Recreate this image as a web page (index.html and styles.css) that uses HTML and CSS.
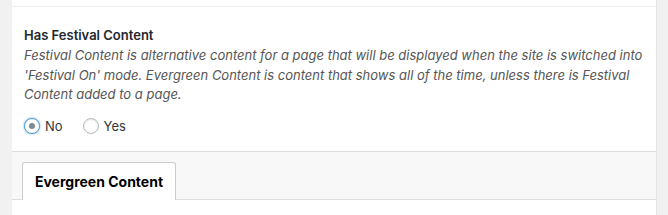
FILE: index.html
```html
<!DOCTYPE html>
<html>
<head>
<meta charset="utf-8">
<link rel="stylesheet" href="styles.css">
</head>
<body>
<div class="page">
  <div class="gutter-left"></div>
  <div class="panel">
    <div class="top-strip"></div>
    <div class="field">
      <div class="label">Has Festival Content</div>
      <p class="desc">Festival Content is alternative content for a page that will be displayed when the site is switched into 'Festival On' mode. Evergreen Content is content that shows all of the time, unless there is Festival Content added to a page.</p>
      <div class="radios">
        <label class="radio"><span class="dot checked"></span>No</label>
        <label class="radio"><span class="dot"></span>Yes</label>
      </div>
    </div>
    <div class="tabs">
      <div class="tab">Evergreen Content</div>
    </div>
    <div class="tab-body"></div>
  </div>
  <div class="gutter-right"></div>
</div>
</body>
</html>
```
FILE: styles.css
```css
html, body { margin: 0; padding: 0; }
body {
  background: #f1f1f1;
  font-family: Inter, "Liberation Sans", sans-serif;
  color: #23282d;
  width: 668px;
  height: 215px;
  overflow: hidden;
}
.page { display: flex; height: 215px; }
.gutter-left { width: 12px; background: #f1f1f1; flex: none; }
.gutter-right { width: 11px; background: #f1f1f1; flex: none; }
.panel {
  flex: 1;
  background: #fff;
  border-right: 1px solid #e5e5e5;
  display: flex;
  flex-direction: column;
}
.top-strip { height: 6px; border-bottom: 1px solid #eee; flex: none; }
.field { padding: 19px 12px 0 12px; height: 145px; flex: none; box-sizing: border-box; border-bottom: 1px solid #ddd; }
.label { font-size: 13px; font-weight: 600; line-height: 18px; color: #23282d; }
.desc {
  margin: 2px 0 0 0;
  font-size: 13px;
  font-style: italic;
  line-height: 19.5px;
  color: #555;
}
.radios { display: flex; gap: 20px; margin-top: 13px; font-size: 13px; color: #32373c; }
.radio { display: flex; align-items: center; gap: 5px; }
.dot {
  width: 16px; height: 16px; box-sizing: border-box;
  border-radius: 50%;
  border: 1px solid #b4b9be;
  background: #fff;
  box-shadow: inset 0 1px 2px rgba(0,0,0,0.1);
  display: flex; align-items: center; justify-content: center;
}
.dot.checked { border-color: #5b9dd9; box-shadow: 0 0 2px rgba(30,140,190,0.8); }
.dot.checked::after {
  content: ""; width: 6px; height: 6px; border-radius: 50%; background: #7e8993;
}
.tabs {
  background: #f8f8f8;
  height: 48px;
  flex: none;
  border-bottom: 1px solid #ddd;
  padding: 10px 0 0 10px;
  box-sizing: border-box;
  display: flex;
  align-items: flex-end;
}
.tab {
  background: #fff;
  border: 1px solid #ccc;
  border-bottom: none;
  border-radius: 3px 3px 0 0;
  height: 38px;
  margin-bottom: -1px;
  width: 154px;
  box-sizing: border-box;
  font-size: 14px;
  font-weight: 700;
  color: #000;
  display: flex; align-items: center; justify-content: center;
}
.tab-body { flex: 1; }
```
